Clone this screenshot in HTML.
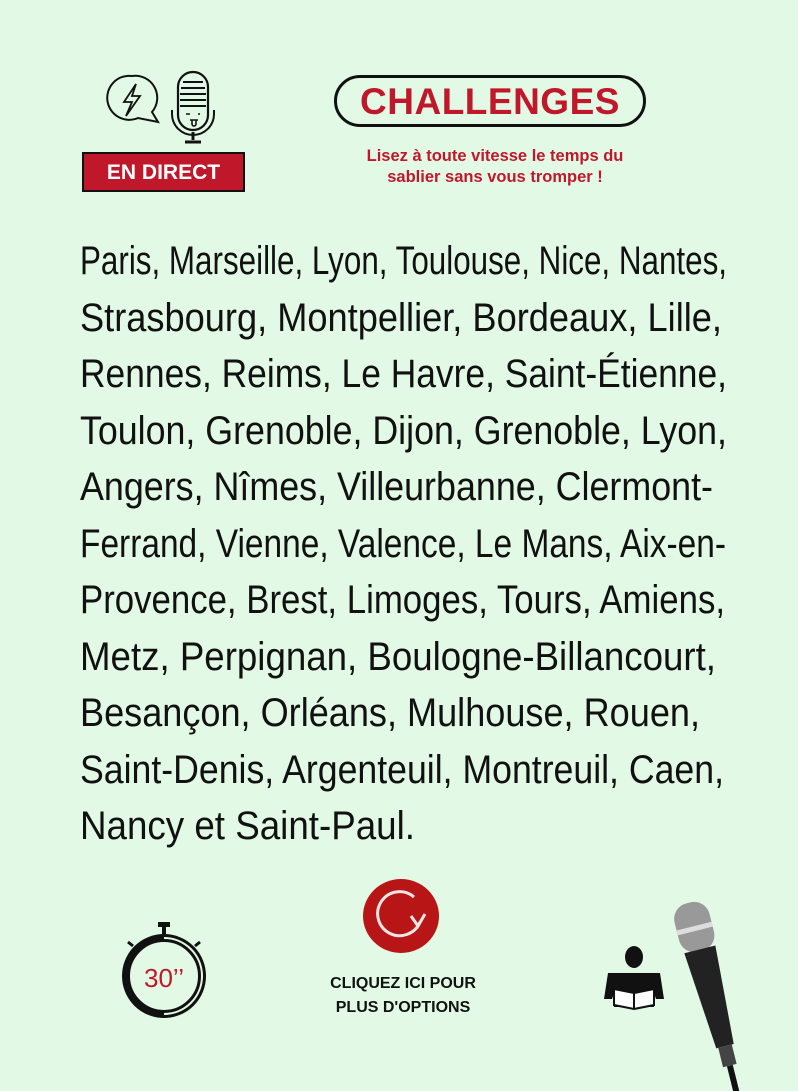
<!DOCTYPE html>
<html><head><meta charset="utf-8"><style>
html,body{margin:0;padding:0}
body{width:798px;height:1091px;background:#e2f9e5;position:relative;overflow:hidden;font-family:"Liberation Sans",sans-serif}
.abs{position:absolute}
.chal{left:334px;top:75px;width:312px;height:52px;border:3px solid #111;border-radius:28px;box-sizing:border-box;color:#c0182a;font-size:37px;font-weight:bold;text-align:center;line-height:48px;letter-spacing:0.5px}
.sub{left:300px;top:146px;width:390px;text-align:center;color:#c0182a;font-weight:bold;font-size:16.5px;line-height:21px}
.live{left:82px;top:152px;width:163px;height:40px;background:#c0182a;border:2px solid #111;box-sizing:border-box;color:#fff;font-weight:bold;font-size:21px;text-align:center;line-height:38px}
.txt{left:80px;top:233px;font-size:40px;line-height:56.5px;color:#111;white-space:nowrap}
.txt div{transform-origin:0 50%;width:max-content}
.opt{left:290px;top:972px;width:226px;text-align:center;font-weight:bold;font-size:16px;line-height:24px;color:#111}
</style></head><body>
<svg class="abs" style="left:104px;top:72px" width="58" height="56" viewBox="0 0 58 56">
<path d="M28 4 A22 22 0 1 0 34 46 L54 50 L48 40 A22 22 0 0 0 28 4Z" fill="none" stroke="#111" stroke-width="2"/>
<path d="M32 12 L20 30 L28 30 L22 44 L36 24 L28 24 Z" fill="none" stroke="#111" stroke-width="1.8"/>
</svg>
<svg class="abs" style="left:166px;top:70px" width="60" height="76" viewBox="0 0 60 76">
<rect x="12" y="2" width="30" height="58" rx="15" fill="none" stroke="#111" stroke-width="2.2"/>
<path d="M17 12h20M15 18h24M14 24h26M14 30h26M14 36h26" stroke="#111" stroke-width="2"/>
<path d="M6 40 v4 a21 21 0 0 0 42 0 v-4" fill="none" stroke="#111" stroke-width="2"/>
<path d="M27 62v8M19 72h16" stroke="#111" stroke-width="3"/>
<path d="M20 44h4M32 44h2M24 50h8 M26 50v4a2 2 0 0 0 4 0v-4" fill="none" stroke="#111" stroke-width="1.6"/>
</svg>
<div class="abs live">EN DIRECT</div>
<div class="abs chal">CHALLENGES</div>
<div class="abs sub">Lisez à toute vitesse le temps du<br>sablier sans vous tromper !</div>
<div class="abs txt" id="t">
<div style="--w:647">Paris, Marseille, Lyon, Toulouse, Nice, Nantes,</div>
<div style="--w:642">Strasbourg, Montpellier, Bordeaux, Lille,</div>
<div style="--w:647">Rennes, Reims, Le Havre, Saint-Étienne,</div>
<div style="--w:647">Toulon, Grenoble, Dijon, Grenoble, Lyon,</div>
<div style="--w:633">Angers, Nîmes, Villeurbanne, Clermont-</div>
<div style="--w:646">Ferrand, Vienne, Valence, Le Mans, Aix-en-</div>
<div style="--w:645">Provence, Brest, Limoges, Tours, Amiens,</div>
<div style="--w:636">Metz, Perpignan, Boulogne-Billancourt,</div>
<div style="--w:620">Besançon, Orléans, Mulhouse, Rouen,</div>
<div style="--w:644">Saint-Denis, Argenteuil, Montreuil, Caen,</div>
<div style="--w:335">Nancy et Saint-Paul.</div>
</div>
<script>
document.querySelectorAll('#t div').forEach(function(d){
var w=parseFloat(getComputedStyle(d).getPropertyValue('--w'));
var a=d.getBoundingClientRect().width;
d.style.transform='scaleX('+(w/a)+')';
});
</script>
<svg class="abs" style="left:118px;top:920px" width="92" height="100" viewBox="0 0 92 100">
<rect x="40" y="2" width="12" height="5" fill="#111"/><rect x="44" y="6" width="4" height="8" fill="#111"/>
<path d="M10 22l5 4M82 22l-5 4" stroke="#111" stroke-width="3"/>
<circle cx="46" cy="56" r="38" fill="none" stroke="#111" stroke-width="8"/>
<path d="M46 18 A38 38 0 0 1 46 94" fill="none" stroke="#e2f9e5" stroke-width="2"/>
<text x="46" y="67" text-anchor="middle" font-family="Liberation Sans" font-size="26" fill="#c0182a">30’’</text>
</svg>
<svg class="abs" style="left:362px;top:878px" width="78" height="76" viewBox="0 0 78 76">
<ellipse cx="39" cy="38" rx="38" ry="37" fill="#b81616"/>
<path d="M52 19 A22 22 0 1 0 58 44" fill="none" stroke="#f4e6e6" stroke-width="3"/>
<path d="M49 38 L56 48 L63 36" fill="none" stroke="#f4e6e6" stroke-width="3"/>
</svg>
<div class="abs opt">CLIQUEZ ICI POUR<br>PLUS D'OPTIONS</div>
<svg class="abs" style="left:600px;top:945px" width="70" height="70" viewBox="0 0 70 70">
<ellipse cx="34" cy="12" rx="9" ry="11" fill="#111"/>
<path d="M8 28h52l4 26h-8l-2 -6v14h-40v-14l-2 6h-8z" fill="#111"/>
<path d="M14 44l20 4l20-4v16l-20 4l-20-4z" fill="#fff" stroke="#111" stroke-width="2"/>
<path d="M34 48v16" stroke="#111" stroke-width="2"/>
</svg>
<svg class="abs" style="left:665px;top:900px" width="110" height="191" viewBox="0 0 110 191">
<g transform="rotate(-14 30 30)">
<rect x="12" y="2" width="36" height="50" rx="16" fill="#999"/>
<rect x="12" y="26" width="36" height="5" fill="#ddd"/>
<path d="M14 50 L46 50 L40 150 L22 150 Z" fill="#222"/>
<rect x="24" y="150" width="14" height="20" fill="#444"/>
<rect x="28" y="170" width="6" height="30" fill="#111"/>
</g>
</svg>
</body></html>
